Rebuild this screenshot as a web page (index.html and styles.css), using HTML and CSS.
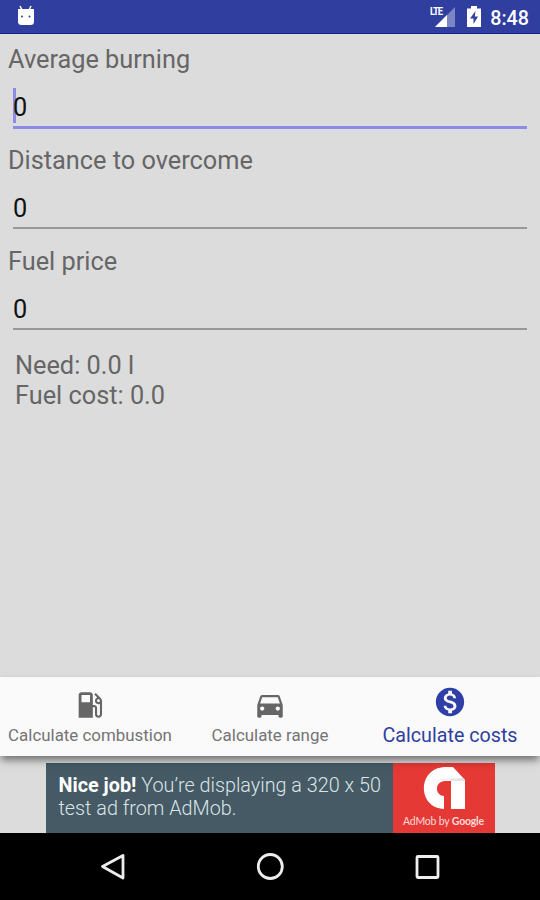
FILE: index.html
```html
<!DOCTYPE html>
<html lang="en">
<head>
    <meta charset="UTF-8">
    <meta name="viewport" content="width=device-width, initial-scale=1.0">
    <title>Calculate costs</title>
    <link rel="stylesheet" href="styles.css">
</head>
<body>
    <div class="status-bar">
        <svg class="robot" width="20" height="22" viewBox="0 0 20 22">
            <path d="M4 1l2 4M15 1l-2 4" stroke="#fff" stroke-width="1.5"/>
            <path d="M2 4h16v12.500q0 3.500-3.500 3.500h-9Q2 20 2 16.500z" fill="#fff"/>
            <circle cx="6" cy="11.500" r="1" fill="#303f9f"/>
            <circle cx="13.500" cy="11.500" r="1" fill="#303f9f"/>
        </svg>
        <div class="status-right">
            <div class="signal">
                <span class="lte">LTE</span>
                <svg width="20" height="20" viewBox="0 0 20 20">
                    <path d="M20 0v20H0z" fill="#7c86c6"/>
                    <path d="M12 8v12H0z" fill="#fff"/>
                </svg>
            </div>
            <svg class="battery" width="14" height="21" viewBox="0 0 14 21">
                <path d="M4 0h6v2.500h4V21H0V2.500h4z" fill="#fff"/>
                <path d="M8.500 5L3 12.500h3.500V18L11 10.500H7.800z" fill="#303f9f"/>
            </svg>
            <span class="clock">8:48</span>
        </div>
    </div>

    <div class="content">
        <div class="field">
            <div class="label">Average burning</div>
            <div class="input focused">0</div>
        </div>
        <div class="field">
            <div class="label">Distance to overcome</div>
            <div class="input">0</div>
        </div>
        <div class="field">
            <div class="label">Fuel price</div>
            <div class="input">0</div>
        </div>
        <div class="result">
            <div>Need: 0.0 l</div>
            <div>Fuel cost: 0.0</div>
        </div>
    </div>

    <div class="tabs">
        <div class="tab">
            <svg width="34" height="34" viewBox="0 0 24 24">
                <path d="M19.770 7.230l.01-.01-3.720-3.720L15 4.560l2.110 2.110c-.94.36-1.610 1.260-1.610 2.330 0 1.380 1.120 2.500 2.500 2.500.36 0 .69-.08 1-.21v7.210c0 .55-.45 1-1 1s-1-.45-1-1V14c0-1.100-.9-2-2-2h-1V5c0-1.100-.9-2-2-2H6c-1.100 0-2 .9-2 2v16h10v-7.500h1.500v5c0 1.380 1.120 2.500 2.500 2.500s2.500-1.120 2.500-2.500V9c0-.69-.28-1.320-.73-1.770zM12 10H6V5h6v5zm6 0c-.55 0-1-.45-1-1s.45-1 1-1 1 .45 1 1-.45 1-1 1z"/>
            </svg>
            <span>Calculate combustion</span>
        </div>
        <div class="tab">
            <svg width="34" height="34" viewBox="0 0 24 24">
                <path d="M18.920 6.010C18.720 5.420 18.160 5 17.500 5h-11c-.66 0-1.210.42-1.420 1.010L3 12v8c0 .55.45 1 1 1h1c.55 0 1-.45 1-1v-1h12v1c0 .55.45 1 1 1h1c.55 0 1-.45 1-1v-8l-2.080-5.990zM6.500 16c-.83 0-1.500-.67-1.500-1.500S5.670 13 6.500 13s1.500.67 1.500 1.500S7.330 16 6.500 16zm11 0c-.83 0-1.500-.67-1.500-1.500s.67-1.500 1.500-1.500 1.500.67 1.500 1.500-.67 1.500-1.500 1.500zM5 11l1.500-4.500h11L19 11H5z"/>
            </svg>
            <span>Calculate range</span>
        </div>
        <div class="tab active">
            <svg width="34" height="34" viewBox="0 0 24 24">
                <path d="M12 2C6.480 2 2 6.480 2 12s4.480 10 10 10 10-4.480 10-10S17.520 2 12 2zm1.410 16.090V20h-2.670v-1.930c-1.710-.36-3.160-1.460-3.270-3.400h1.960c.1 1.050.82 1.870 2.650 1.870 1.960 0 2.400-.98 2.400-1.590 0-.83-.44-1.610-2.670-2.140-2.480-.6-4.180-1.620-4.180-3.670 0-1.720 1.390-2.840 3.110-3.210V4h2.670v1.950c1.860.45 2.790 1.860 2.850 3.390H14.300c-.05-1.110-.64-1.870-2.220-1.870-1.500 0-2.400.68-2.400 1.640 0 .84.65 1.390 2.670 1.910s4.180 1.390 4.180 3.910c-.01 1.830-1.380 2.830-3.120 3.160z"/>
            </svg>
            <span>Calculate costs</span>
        </div>
    </div>

    <div class="ad-row">
        <div class="ad">
            <div class="ad-text"><b>Nice job!</b> You’re displaying a 320 x 50<br>test ad from AdMob.</div>
            <div class="ad-logo">
                <svg width="44" height="44" viewBox="0 0 44 44">
                    <path d="M23 0H31L43 13V42H29V14H23C13 14 12 28 22 29V42C-5 41-5 1 23 0z" fill="#fff"/>
                    <path d="M15 14Q22 10 30 14H43V13L41 11Q28 11 15 14z" fill="#e4e4e4"/>
                </svg>
                <span>AdMob by <b>Google</b></span>
            </div>
        </div>
    </div>

    <div class="nav-bar">
        <svg width="28" height="30" viewBox="0 0 28 30">
            <path d="M24 3.500v22.500L3.500 14.500z"/>
        </svg>
        <svg width="28" height="30" viewBox="0 0 28 30">
            <circle cx="14.300" cy="14.500" r="12"/>
        </svg>
        <svg width="28" height="30" viewBox="0 0 28 30">
            <rect x="4" y="4.500" width="21" height="21" rx="1"/>
        </svg>
    </div>
</body>
</html>
```

FILE: styles.css
```css
* {
    box-sizing: border-box;
}
body {
    margin: 0;
    width: 540px;
    height: 900px;
    display: flex;
    flex-direction: column;
    overflow: hidden;
    background-color: #dcdcdc;
    font-family: Roboto, sans-serif;
}
svg {
    display: block;
    flex: none;
}
.status-bar {
    height: 34px;
    flex: none;
    display: flex;
    justify-content: space-between;
    align-items: center;
    padding: 0 11px 0 16px;
    background-color: #303f9f;
    border-bottom: 1px solid #14208c;
    color: white;
}
.robot {
    margin-top: -1px;
}
.status-right {
    display: flex;
    align-items: center;
}
.signal {
    position: relative;
    margin: 0 12px 0 0;
}
.lte {
    position: absolute;
    left: -5px;
    top: -1px;
    font-size: 11px;
    line-height: 12px;
    font-weight: 700;
    letter-spacing: -1.2px;
    transform: scaleX(0.85);
    transform-origin: left;
}
.battery {
    margin-right: 9px;
}
.clock {
    font-size: 19.700px;
    font-weight: 500;
    line-height: 24px;
    margin-top: 4px;
}
.content {
    flex: 1;
    padding: 11px 8px 0;
    color: #666;
    font-size: 25.300px;
    line-height: 30px;
}
.field {
    height: 101px;
}
.input {
    height: 53px;
    margin: 0 5px;
    padding-top: 18px;
    border-bottom: 2px solid #999;
    color: #111;
}
.input.focused {
    height: 54px;
    border-bottom: 3px solid #8c8ce8;
    background: linear-gradient(#8c8ce8, #8c8ce8) 0 13px / 3px 35px no-repeat;
}
.result {
    padding: 3px 7px;
    line-height: 29.600px;
}
.tabs {
    position: relative;
    height: 79px;
    flex: none;
    display: flex;
    background-color: #fafafa;
    box-shadow: 0 5px 8px -1px rgba(0, 0, 0, 0.5);
}
.tab {
    flex: 1;
    display: flex;
    flex-direction: column;
    align-items: center;
    padding-top: 11px;
    color: #747474;
    fill: #666;
    font-size: 16.900px;
    line-height: 20px;
    gap: 3px;
    white-space: nowrap;
}
.tab.active {
    padding-top: 8px;
    color: #303f9f;
    fill: #303fa8;
    font-size: 19.700px;
    line-height: 24px;
    gap: 5px;
}
.ad-row {
    height: 77px;
    flex: none;
    display: flex;
    justify-content: center;
    align-items: flex-end;
}
.ad {
    width: 449px;
    height: 70px;
    display: flex;
}
.ad-text {
    flex: 1;
    padding: 11px 0 0 13px;
    background-color: #455a64;
    color: #dce4e8;
    font-size: 19.800px;
    font-weight: 300;
    line-height: 23px;
    white-space: nowrap;
}
.ad-text b {
    color: white;
    font-weight: 700;
}
.ad-logo {
    width: 102px;
    display: flex;
    flex-direction: column;
    align-items: center;
    padding-top: 4px;
    background-color: #e53935;
    color: #ffd9d8;
    font-size: 10.500px;
    line-height: 14px;
    font-family: Lato, sans-serif;
    letter-spacing: -0.2px;
    white-space: nowrap;
}
.ad-logo span {
    margin-top: 3px;
}
.ad-logo b {
    font-weight: 700;
}
.nav-bar {
    height: 67px;
    flex: none;
    display: flex;
    justify-content: space-between;
    align-items: center;
    padding: 0 99px;
    background-color: black;
    fill: none;
    stroke: #eee;
    stroke-width: 2.800px;
    stroke-linejoin: round;
}
```
